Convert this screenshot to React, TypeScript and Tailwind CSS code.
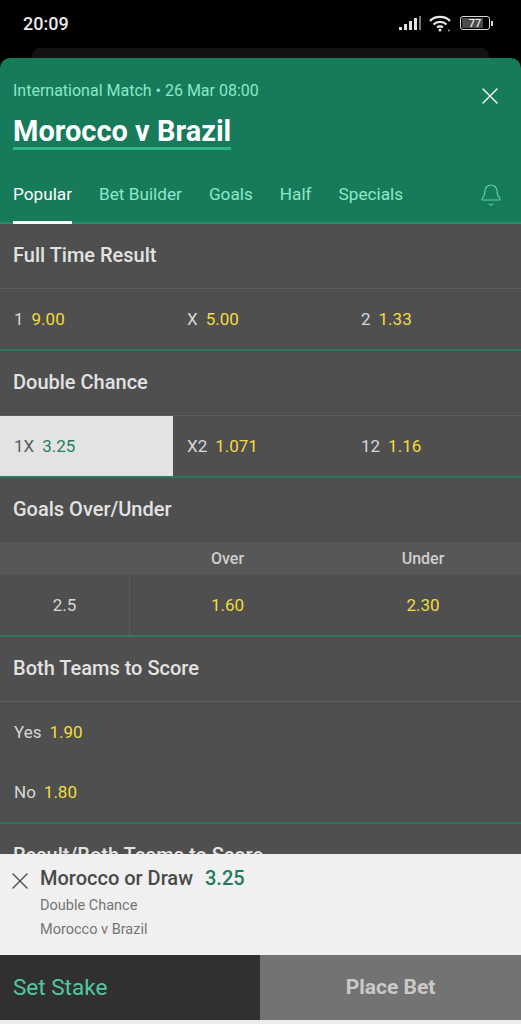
import React from 'react';
import { X, Bell } from 'lucide-react';

const Odd = ({ label, value, selected }: { label: string; value: string; selected?: boolean }) => (
  <div className={`flex items-center gap-[8px] pl-[14px] pt-[1px] h-full ${selected ? 'bg-[#e3e3e3] text-[#5c5c5c]' : 'text-[#d8d8d8]'}`}>
    <span>{label}</span>
    <span className={selected ? 'text-[#1f7d5e]' : 'text-[#f2dc3e]'}>{value}</span>
  </div>
);

const Heading = ({ children }: { children: React.ReactNode }) => (
  <div className="h-[65px] flex items-center pl-[13px] pb-[2px] text-[20px] font-medium text-[#e2e2e2] border-b border-[#5f5f5f]">{children}</div>
);

const Divider = () => <div className="h-[2px] bg-[#2f7560]" />;

export default function App() {
  return (
    <div className="w-[521px] h-[1024px] flex flex-col overflow-hidden bg-black text-[17px]" style={{ fontFamily: 'Roboto, sans-serif' }}>
      {/* status bar */}
      <div className="h-[48px] shrink-0 flex items-center justify-between pl-[23px] pr-[28px] pb-[2px]">
        <span className="text-[18px] font-medium text-[#e8e8e8]">20:09</span>
        <div className="flex items-center gap-[7px]">
          <svg width="23" height="16" viewBox="0 0 23 16" fill="#e0e0e0">
            <rect x="0" y="12" width="3" height="3" />
            <rect x="5" y="9" width="3" height="6" />
            <rect x="10" y="6" width="3" height="9" />
            <rect x="15" y="3" width="3" height="12" />
            <rect x="20" y="1" width="2" height="14" fill="#777" />
          </svg>
          <svg width="23" height="17" viewBox="0 0 23 17" fill="none" stroke="#e8e8e8" strokeWidth="2.2">
            <path d="M1 6 C6 0.5 16 0.5 21 6" />
            <path d="M4.5 9.5 C8 6 14 6 17.5 9.5" />
            <path d="M8 12.5 C9.8 11 12.2 11 14 12.5" />
            <circle cx="11" cy="15" r="1.5" fill="#e8e8e8" stroke="none" />
            <circle cx="20" cy="15.5" r="1" fill="#999" stroke="none" />
          </svg>
          <div className="flex items-center ml-[1px]">
            <div className="w-[30px] h-[14px] rounded-[3px] border border-[#d8d8d8] relative flex items-center justify-center overflow-hidden">
              <div className="absolute left-[1px] top-[1px] bottom-[1px] w-[21px] bg-[#4a4a4a]" />
              <span className="relative text-[11px] leading-none font-medium text-[#e8e8e8]">77</span>
            </div>
            <div className="w-[2px] h-[5px] bg-[#d8d8d8] ml-[1px]" />
          </div>
        </div>
      </div>
      <div className="h-[10px] shrink-0 mx-[32px] rounded-t-[8px] bg-[#121212]" />

      {/* match header */}
      <div className="h-[166px] shrink-0 bg-[#167a5b] rounded-t-[10px] flex flex-col border-b-2 border-[#2a8a6c]">
        <div className="flex justify-between pl-[13px] pr-[17px] pt-[24px]">
          <div className="flex flex-col items-start">
            <span className="text-[16px] leading-[18px] text-[#8ce8c6]">International Match • 26 Mar 08:00</span>
            <span className="mt-[15px] text-[29px] leading-[32px] font-bold text-white border-b-[3px] border-[#2cb68a]">Morocco v Brazil</span>
          </div>
          <X size={28} strokeWidth={1.2} className="text-white" />
        </div>
        <div className="mt-auto flex items-end justify-between pl-[13px] pr-[18px]">
          <div className="flex gap-[27px] text-[17.2px] leading-[24px] text-[#8ce8c6]">
            <div className="pb-[15px] text-white border-b-[3px] border-white mb-[-2px]">Popular</div>
            <div className="pb-[15px]">Bet Builder</div>
            <div className="pb-[15px]">Goals</div>
            <div className="pb-[15px]">Half</div>
            <div className="pb-[15px]">Specials</div>
          </div>
          <Bell size={24} strokeWidth={1.1} className="text-[#5fd3aa] mb-[15px]" />
        </div>
      </div>

      {/* markets, cut off by the bet slip */}
      <div className="flex-1 min-h-0 overflow-hidden bg-[#4f4f4f]">
        <Heading>Full Time Result</Heading>
        <div className="h-[60px] grid grid-cols-[173px_174px_174px]">
          <Odd label="1" value="9.00" />
          <Odd label="X" value="5.00" />
          <Odd label="2" value="1.33" />
        </div>
        <Divider />
        <Heading>Double Chance</Heading>
        <div className="h-[60px] grid grid-cols-[173px_174px_174px]">
          <Odd label="1X" value="3.25" selected />
          <Odd label="X2" value="1.071" />
          <Odd label="12" value="1.16" />
        </div>
        <Divider />
        <div className="h-[64px] flex items-center pl-[13px] pb-[2px] text-[20px] font-medium text-[#e2e2e2]">Goals Over/Under</div>
        <div className="h-[33px] bg-[#575757] grid grid-cols-[130px_195px_196px] items-center text-center text-[16px] font-medium text-[#cfcfcf]">
          <span />
          <span>Over</span>
          <span>Under</span>
        </div>
        <div className="h-[60px] pt-[1px] grid grid-cols-[130px_195px_196px] items-center text-center">
          <span className="h-full flex items-center justify-center border-r border-[#5c5c5c] text-[#d8d8d8]">2.5</span>
          <span className="text-[#f2dc3e]">1.60</span>
          <span className="text-[#f2dc3e]">2.30</span>
        </div>
        <Divider />
        <Heading>Both Teams to Score</Heading>
        <div className="h-[60px]"><Odd label="Yes" value="1.90" /></div>
        <div className="h-[60px]"><Odd label="No" value="1.80" /></div>
        <Divider />
        <div className="h-[64px] flex items-center pl-[13px] pb-[2px] text-[20px] font-medium text-[#e2e2e2]">Result/Both Teams to Score</div>
      </div>

      {/* bet slip */}
      <div className="h-[101px] shrink-0 bg-[#f0f0f0] flex pl-[6px] pt-[14px]">
        <X size={28} strokeWidth={1.2} className="text-[#4a4a4a] mt-[-1px] shrink-0" />
        <div className="ml-[6px]">
          <div className="flex gap-[12px] text-[20px] leading-[21px] font-medium text-[#4a4a4a]">
            <span>Morocco or Draw</span>
            <span className="text-[#1f7d5e]">3.25</span>
          </div>
          <div className="mt-[5px] text-[14.5px] leading-[24px] text-[#757575]">
            <div>Double Chance</div>
            <div>Morocco v Brazil</div>
          </div>
        </div>
      </div>
      <div className="h-[65px] shrink-0 grid grid-cols-[260px_261px]">
        <div className="bg-[#303030] flex items-center pl-[13px] text-[22.5px] text-[#52c9a0]">Set Stake</div>
        <div className="bg-[#737373] flex items-center justify-center text-[21px] font-bold text-[#c9c9c9]">Place Bet</div>
      </div>
      <div className="h-[4px] shrink-0 bg-[#ececec]" />
    </div>
  );
}
